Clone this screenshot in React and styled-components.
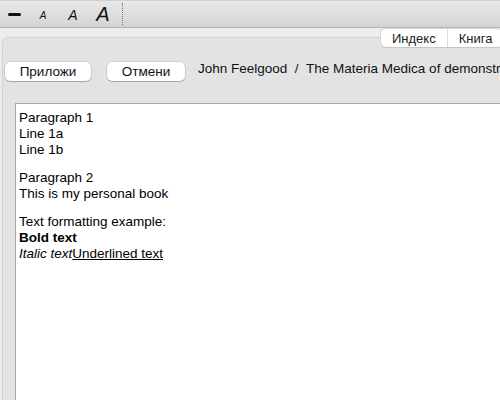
import React from "react";
import styled, { createGlobalStyle } from "styled-components";

const Global = createGlobalStyle`
  html, body { margin: 0; padding: 0; }
  body {
    background: #ececec;
    font-family: "Liberation Sans", Arial, Helvetica, sans-serif;
    font-size: 13.5px;
    color: #111;
    overflow: hidden;
  }
`;

const Window = styled.div`
  width: 500px;
  height: 400px;
  display: flex;
  flex-direction: column;
  overflow: hidden;
`;

const Toolbar = styled.div`
  flex: none;
  display: flex;
  align-items: center;
  background: linear-gradient(#e9e9e9, #d3d3d3);
  border-top: 1px solid #d0d0d0;
  border-bottom: 1px solid #b4b4b4;
  box-sizing: border-box;
  height: 28px;
`;

const Tool = styled.div`
  width: ${(p) => p.w}px;
  height: 100%;
  display: flex;
  align-items: center;
  justify-content: center;
`;

const Dash = styled.div`
  width: 13px;
  height: 3px;
  border-radius: 2px;
  background: #111;
`;

const LetterA = styled.span`
  font-style: italic;
  font-family: "Liberation Sans", Arial, sans-serif;
  font-size: ${(p) => p.size}px;
  line-height: 1;
  color: #111;
  margin-top: ${(p) => p.dy}px;
`;

const Separator = styled.div`
  width: 0;
  height: 22px;
  border-left: 1px dotted #777;
  margin-left: 4px;
`;

const Body = styled.div`
  flex: 1;
  padding-top: 9px;
  display: flex;
  flex-direction: column;
`;

const Panel = styled.div`
  position: relative;
  flex: 1;
  margin-left: 2px;
  margin-right: -10px;
  border: 1px solid #d2d2d2;
  border-bottom: none;
  border-radius: 6px 6px 0 0;
  background: #e3e3e3;
  display: flex;
  flex-direction: column;
`;

const Tabs = styled.div`
  position: absolute;
  top: -9px;
  left: 378px;
  height: 18px;
  display: flex;
  background: #fff;
  border-radius: 5px;
  box-shadow: 0 0 0 0.5px #c4c4c4, 0 1px 1px rgba(0, 0, 0, 0.12);
  overflow: hidden;
`;

const Tab = styled.div`
  padding: 0 ${(p) => p.pad}px;
  display: flex;
  align-items: center;
  font-size: 13px;
  color: #222;
  border-left: ${(p) => (p.first ? "none" : "1px solid #dcdcdc")};
`;

const ActionRow = styled.div`
  display: flex;
  align-items: center;
  margin-top: 24px;
  padding-left: 2px;
  height: 19px;
`;

const Button = styled.button`
  flex: none;
  height: 19px;
  width: ${(p) => p.w}px;
  margin-right: ${(p) => p.mr}px;
  padding: 0;
  border: none;
  border-radius: 5px;
  background: #fff;
  box-shadow: 0 0 0 0.5px rgba(0, 0, 0, 0.18), 0 1px 1px rgba(0, 0, 0, 0.2);
  font-family: "Liberation Sans", Arial, sans-serif;
  font-size: 13.5px;
  color: #111;
`;

const Crumb = styled.div`
  white-space: nowrap;
  font-size: 13.5px;
  color: #111;
  margin-top: -6px;
`;

const Editor = styled.div`
  flex: 1;
  margin-top: 22px;
  margin-left: 12px;
  background: #fff;
  border-left: 1px solid #a6a6a6;
  border-top: 1px solid #a6a6a6;
  padding: 6px 3px;
  line-height: 16px;
  font-size: 13.5px;
  color: #000;
`;

const Para = styled.p`
  margin: 0 0 12px;
`;

const Bold = styled.strong`
  font-weight: bold;
`;
const Ital = styled.em`
  font-style: italic;
`;
const Under = styled.span`
  text-decoration: underline;
`;

export default function App() {
  return (
    <Window>
      <Global />
      <Toolbar>
        <Tool w={28}>
          <Dash />
        </Tool>
        <Tool w={30}>
          <LetterA size={10} dy={3}>A</LetterA>
        </Tool>
        <Tool w={30}>
          <LetterA size={14} dy={2}>A</LetterA>
        </Tool>
        <Tool w={30}>
          <LetterA size={20} dy={0}>A</LetterA>
        </Tool>
        <Separator />
      </Toolbar>
      <Body>
        <Panel>
          <Tabs>
            <Tab first pad={11}>Индекс</Tab>
            <Tab pad={11}>Книга</Tab>
          </Tabs>
          <ActionRow>
            <Button w={86} mr={16}>Приложи</Button>
            <Button w={78} mr={13}>Отмени</Button>
            <Crumb>John Feelgood&nbsp; / &nbsp;The Materia Medica of demonstration</Crumb>
          </ActionRow>
          <Editor>
            <Para>
              Paragraph 1<br />Line 1a<br />Line 1b
            </Para>
            <Para>
              Paragraph 2<br />This is my personal book
            </Para>
            <Para>
              Text formatting example:<br />
              <Bold>Bold text</Bold>
              <br />
              <Ital>Italic text</Ital>
              <Under>Underlined text</Under>
            </Para>
          </Editor>
        </Panel>
      </Body>
    </Window>
  );
}
